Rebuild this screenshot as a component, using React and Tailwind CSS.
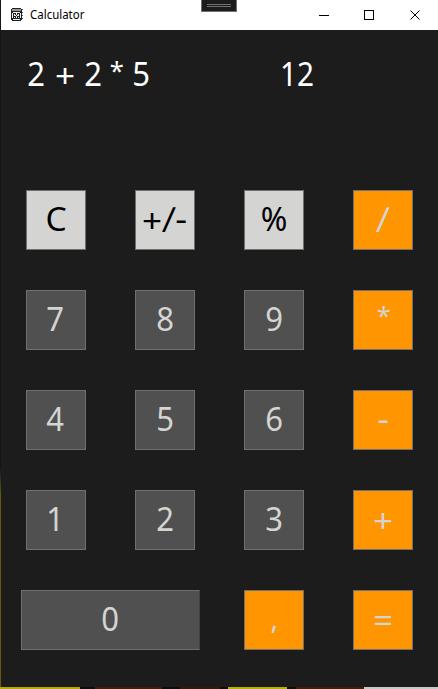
const tones = {
  light: "bg-[#d4d4d2] text-black",
  dark: "bg-[#505050] text-[#d4d4d2]",
  accent: "bg-[#ff9500] text-[#d4d4d2]",
};

const keys = [
  ["C", "light"], ["+/-", "light"], ["%", "light"], ["/", "accent"],
  ["7", "dark"], ["8", "dark"], ["9", "dark"], ["*", "accent"],
  ["4", "dark"], ["5", "dark"], ["6", "dark"], ["-", "accent"],
  ["1", "dark"], ["2", "dark"], ["3", "dark"], ["+", "accent"],
  ["0", "dark"], [",", "accent"], ["=", "accent"],
];

const glyphStyles = {
  "*": "translate-y-[-4px] scale-[0.8]",
  "+": "translate-y-[2px] scale-x-[1.1]",
  "=": "translate-y-[1px] scale-x-[1.1]",
  "-": "scale-x-[1.15]",
  "/": "skew-x-[-6deg] scale-y-[1.08]",
  ",": "translate-y-[-1px] scale-[0.9]",
  "C": "scale-x-[1.05]",
  "%": "",
};

function Glyph({ children }) {
  return <span className={`inline-block ${glyphStyles[children] ?? "scale-x-[0.97]"}`}>{children}</span>;
}

function Key({ label, tone }) {
  const wide = label === "0";
  return (
    <div className={wide ? "col-span-2 flex items-center pl-5" : "flex items-center justify-center"}>
      <button
        className={`flex h-[60px] items-center justify-center border border-[#707070] pb-[3px] text-[32px] leading-none ${tones[tone]} ${wide ? "w-[179px] border-r-[#404040]" : "w-[60px]"}`}
      >
        {label === "+/-" ? (
          <span className="flex gap-[1.5px]">
            {label.split("").map((ch) => <Glyph key={ch}>{ch}</Glyph>)}
          </span>
        ) : (
          <Glyph>{label}</Glyph>
        )}
      </button>
    </div>
  );
}

function TitleBar() {
  return (
    <div className="relative flex h-[30px] items-center bg-white text-black">
      <svg className="ml-[10px] h-4 w-[14px]" viewBox="0 0 14 16" shapeRendering="crispEdges">
        <path d="M1 1h9v1h1v11h-1v1H1v-1H0V2h1z" fill="#222" />
        <path d="M1 2h9v2H1z" fill="#999" />
        <path d="M2 5h7v1H2zM1 6h1v5H1zM9 6h1v5H9zM3 7h1v1H3zM5 6h1v2H5zM7 7h1v1H7zM3 8h2v1H3zM6 8h2v1H6zM5 9h1v2H5zM3 10h1v1H3zM7 10h1v1H7zM2 12h7v1H2z" fill="#eee" />
        <path d="M11.500 2v11" stroke="#555" strokeDasharray="1 2" />
      </svg>
      <span className="ml-[5px] origin-left scale-x-[0.955] text-[12px] leading-none">Calculator</span>
      <div className="absolute left-[200px] top-0 flex h-3 w-9 flex-col items-center justify-center gap-px border border-t-0 border-[#707070] bg-[#1c1c1c]">
        <div className="h-px w-6 bg-[#707070]" />
        <div className="h-px w-6 bg-[#707070]" />
      </div>
      <svg className="ml-auto mr-[17px] h-[11px] w-[102px]" viewBox="0 0 102 11" fill="none" stroke="#000">
        <path d="M0 5.5h10M45.5.5h9v9h-9z" shapeRendering="crispEdges" />
        <path d="M91.5.5l9 9M100.500.5l-9 9" />
      </svg>
    </div>
  );
}

function Display() {
  return (
    <div className="flex h-[140px] items-start pt-[26px] text-[32px] leading-9 text-white">
      <div className="flex w-[279px] items-start pl-[27px]">
        <div className="flex w-[17px] justify-center"><Glyph>2</Glyph></div>
        <div className="flex w-[40px] justify-center"><Glyph>+</Glyph></div>
        <div className="flex w-[17px] justify-center"><Glyph>2</Glyph></div>
        <div className="flex w-[30px] justify-center"><Glyph>*</Glyph></div>
        <div className="flex w-[18px] justify-center"><Glyph>5</Glyph></div>
      </div>
      <div className="origin-left scale-x-[0.93]">12</div>
    </div>
  );
}

export default function App() {
  return (
    <div className="flex h-[689px] w-[438px] flex-col bg-[#1c1c1c] font-['Noto_Sans','Open_Sans',sans-serif]">
      <div className="flex h-[687px]">
        <div className="w-px bg-linear-to-b from-[#151515] from-68% to-[#625c0c] to-72%" />
        <div className="flex-1">
          <TitleBar />
          <Display />
          <div className="grid grid-cols-4 grid-rows-[repeat(5,100px)]">
            {keys.map(([label, tone]) => (
              <Key key={label} label={label} tone={tone} />
            ))}
          </div>
        </div>
      </div>
      <div className="flex h-[2px]">
        <div className="w-20 bg-[#b5a900]" />
        <div className="w-[15px] bg-[#100c0a]" />
        <div className="w-[67px] bg-[#421d08]" />
        <div className="w-[18px] bg-[#100c0a]" />
        <div className="w-[40px] bg-[#34180a]" />
        <div className="w-[8px] bg-[#100c0a]" />
        <div className="w-[59px] bg-[#b5b000]" />
        <div className="w-[9px] bg-[#100c0a]" />
        <div className="w-[68px] bg-[#421d08]" />
        <div className="flex-1 bg-[#c8c8c8]" />
      </div>
    </div>
  );
}
